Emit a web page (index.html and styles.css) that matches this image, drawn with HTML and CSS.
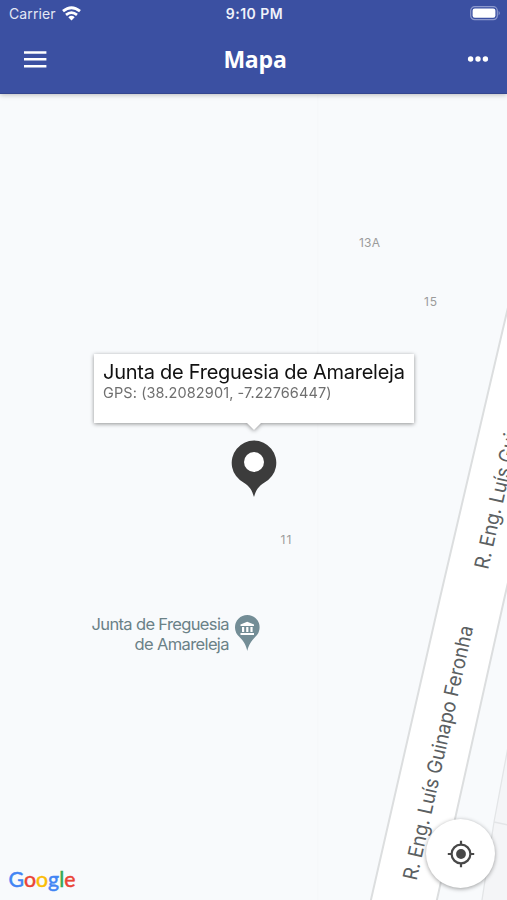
FILE: index.html
```html
<!DOCTYPE html>
<html lang="pt">
<head>
<meta charset="utf-8">
<title>Mapa</title>
<link rel="stylesheet" href="styles.css">
</head>
<body>
<div class="app">
  <header class="header">
    <div class="status">
      <div class="carrier"><span>Carrier</span>
        <svg class="wifi" width="19" height="15" viewBox="0 0 19 15"><g fill="none" stroke="#fff" stroke-width="2.8"><path d="M1 5.2Q9.5 -1.8 18 5.2"/><path d="M4 8.8Q9.5 4.4 15 8.8"/></g><path d="M6.3 11.2Q9.5 8.4 12.7 11.2L9.5 14.4Z" fill="#fff"/></svg>
      </div>
      <span class="time">9:10 PM</span>
      <svg class="battery" width="31" height="15" viewBox="0 0 31 15"><rect x=".7" y=".7" width="26.6" height="13" rx="4" fill="none" stroke="#8d99cd" stroke-width="1.2"/><rect x="2.6" y="2.6" width="22.8" height="9.2" rx="2.2" fill="#fff"/><path d="M28.6 4.8Q31 7.2 28.6 9.6Z" fill="#8d99cd"/></svg>
    </div>
    <div class="toolbar">
      <svg width="24" height="18" viewBox="0 0 24 18"><path d="M1 2.4H23.4M1 9.3H23.4M1 16.2H23.4" stroke="#fff" stroke-width="2.5"/></svg>
      <h1>Mapa</h1>
      <svg width="22" height="8" viewBox="0 0 22 8" fill="#fff"><circle cx="3.6" cy="4" r="2.7"/><circle cx="11" cy="4" r="2.7"/><circle cx="18.4" cy="4" r="2.7"/></svg>
    </div>
  </header>
  <main class="map">
    <svg class="tiles" width="507" height="806" viewBox="0 94 507 806">
      <rect y="94" width="507" height="806" fill="#f8fafc"/>
      <path d="M318 94V900" stroke="#f5f7f9"/>
      <path d="M508 747L494 822L482 900H508Z" fill="#f4f5f7"/>
      <path d="M508 747L494 822L482 900M494 822L508 825" fill="none" stroke="#e3e5e7" stroke-width="1.3"/>
      <path d="M509 303L439.5 600L370 904H437L504 600L509 578Z" fill="#fff"/>
      <path d="M509 303L439.5 600L370 904M509 578L504 600L436 904" fill="none" stroke="#dcdedf" stroke-width="2"/>
      <g class="street">
        <text transform="translate(416.5 881) rotate(-77.4)" textLength="260" lengthAdjust="spacingAndGlyphs">R. Eng. Luís Guinapo Feronha</text>
        <text transform="translate(488 570) rotate(-77.4)" textLength="260" lengthAdjust="spacingAndGlyphs">R. Eng. Luís Guinapo Feronha</text>
      </g>
      <g class="number">
        <text x="359" y="247" textLength="21">13A</text>
        <text x="424" y="306" textLength="13">15</text>
        <text x="280.5" y="544" textLength="11">11</text>
      </g>
      <g class="place">
        <text x="91.5" y="630" textLength="138">Junta de Freguesia</text>
        <text x="134.5" y="650" textLength="95">de Amareleja</text>
      </g>
      <path d="M247.3 651C246 645.5 244.5 642 239 636.5A12.3 12.3 0 1 1 255.6 636.5C250.5 642 248.5 645.5 247.3 651Z" fill="#738d96"/>
      <path d="M240.5 626V624.5L247.2 621.7L254 624.5V626ZM242 627H244.2V632H242ZM246.2 627H248.4V632H246.2ZM250.4 627H252.6V632H250.4ZM240.5 633H254V635H240.5Z" fill="#fff"/>
      <path d="M254 497C252 490.5 250 486.5 243.5 482.5A22.3 22.3 0 1 1 264.5 482.5C258 486.5 256 490.5 254 497Z" fill="#3c3c3c"/>
      <circle cx="254" cy="462" r="10" fill="#fff"/>
      <text class="google" x="8.500" y="887" textLength="67" lengthAdjust="spacingAndGlyphs"><tspan fill="#4285f4" stroke="#4285f4">G</tspan><tspan fill="#ea4335" stroke="#ea4335">o</tspan><tspan fill="#fbbc05" stroke="#fbbc05">o</tspan><tspan fill="#4285f4" stroke="#4285f4">g</tspan><tspan fill="#34a853" stroke="#34a853">l</tspan><tspan fill="#ea4335" stroke="#ea4335">e</tspan></text>
    </svg>
    <section class="popup">
      <h2>Junta de Freguesia de Amareleja</h2>
      <p>GPS: (38.2082901, -7.22766447)</p>
    </section>
    <button class="locate" aria-label="Localização">
      <svg width="28" height="28" viewBox="0 0 28 28" fill="none" stroke="#484848" stroke-width="2.2"><circle cx="14" cy="14" r="9.4"/><path d="M14 .8V5M14 23V27.2M.8 14H5M23 14H27.2"/><circle cx="14" cy="14" r="4.9" fill="#484848" stroke="none"/></svg>
    </button>
  </main>
</div>
</body>
</html>
```
FILE: styles.css
```css
* { box-sizing: border-box; }
body { margin: 0; font-family: Inter, "Liberation Sans", sans-serif; }
.app { width: 507px; height: 900px; display: flex; flex-direction: column; overflow: hidden; }
.header { height: 94px; flex: none; background: #3b50a2; color: #fff; position: relative; z-index: 1; border-bottom: 1px solid #34468f; box-shadow: 0 1px 5px rgba(0,0,0,.25); }
.status { height: 27px; display: grid; grid-template-columns: 1fr auto 1fr; align-items: center; padding: 0 7px 0 9px; font-size: 14px; }
.carrier { display: flex; align-items: center; gap: 6px; color: #e4e7f4; letter-spacing: .1px; }
.time { font-weight: 600; font-size: 14px; letter-spacing: .5px; color: #f0f2fa; }
.battery { justify-self: end; margin-right: -1px; }
.toolbar { height: 66px; display: flex; align-items: center; justify-content: space-between; padding: 0 18px 2px 23px; }
h1 { margin: 0 4px 0 0; font: 700 23px/30px "Open Sans", sans-serif; letter-spacing: -.2px; }
.map { position: relative; flex: 1; }
.tiles { display: block; }
.street { font-size: 20px; fill: #5b6062; }
.number { font-size: 12px; fill: #9b9b9b; }
.place { font-size: 16.5px; fill: #6a8187; }
.google { font: 400 22px Lato, sans-serif; stroke-width: .5px; }
.popup { position: absolute; left: 94px; top: 260px; width: 320px; height: 69px; padding: 6px 9px; background: #fff; filter: drop-shadow(0 1px 2px rgba(0,0,0,.42)); white-space: nowrap; }
.popup::after { content: ""; position: absolute; left: 152px; top: 68px; border: 8px solid transparent; border-top-color: #fff; border-bottom: 0; }
.popup h2 { margin: 0; font-size: 20px; font-weight: 400; line-height: 24px; color: #111; letter-spacing: -.26px; }
.popup p { margin: 0; font-size: 14.5px; line-height: 17px; color: #6f6f6f; letter-spacing: .1px; }
.locate { position: absolute; left: 426px; top: 725px; width: 69px; height: 69px; padding: 0; border: 0; border-radius: 50%; background: #fff; display: flex; align-items: center; justify-content: center; box-shadow: 0 1px 4px rgba(0,0,0,.38); }
```
